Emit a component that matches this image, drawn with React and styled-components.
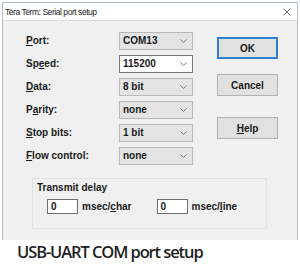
import React from 'react';
import styled, { createGlobalStyle } from 'styled-components';

const GlobalStyle = createGlobalStyle`
  html, body {
    margin: 0;
    background: #fff;
  }
`;

const Page = styled.div`
  width: 300px;
  height: 264px;
  padding: 2px 0 0 2px;
  box-sizing: border-box;
  overflow: hidden;
`;

const Window = styled.div`
  width: 296px;
  height: 238px;
  box-sizing: border-box;
  border: 1px solid #aebccc;
  border-bottom: none;
  background: #f0f0f0;
  display: flex;
  flex-direction: column;
  font-family: "Liberation Sans", Arial, sans-serif;
  color: #1a1a1a;
`;

const TitleBar = styled.div`
  height: 17px;
  background: #fff;
  border-bottom: 1px solid #dcdcdc;
  display: flex;
  align-items: center;
  justify-content: space-between;
  padding: 0 6px 0 2px;
  font-size: 8.5px;
  letter-spacing: -0.45px;
  color: #222;
`;

const Client = styled.div`
  display: flex;
  flex-direction: column;
`;

const TopArea = styled.div`
  display: flex;
`;

const Form = styled.div`
  display: flex;
  flex-direction: column;
  padding: 8px 0 0 23px;
`;

const Row = styled.div`
  height: 23px;
  display: flex;
  align-items: center;
`;

const Label = styled.div`
  width: 93px;
  font-size: 10px;
  font-weight: bold;
`;

const Key = styled.span`
  text-decoration: underline;
  text-underline-offset: 1px;
`;

const Select = styled.div`
  width: 74px;
  height: 18px;
  box-sizing: border-box;
  border: 1px solid ${p => (p.$editable ? '#7a7a7a' : '#b9b9b9')};
  background: ${p => (p.$editable ? '#fff' : '#e4e4e4')};
  display: flex;
  align-items: center;
  justify-content: space-between;
  padding: 0 5px 0 3px;
  font-size: 10px;
  font-weight: bold;
`;

const Buttons = styled.div`
  display: flex;
  flex-direction: column;
  padding: 16px 0 0 24px;
`;

const Button = styled.div`
  width: 61px;
  height: 22px;
  box-sizing: border-box;
  margin-top: ${p => p.$gap || 0}px;
  border: ${p => (p.$primary ? '2px solid #2f7fd0' : '1px solid #b3b3b3')};
  background: #e1e1e1;
  display: flex;
  align-items: center;
  justify-content: center;
  font-size: 10px;
  font-weight: bold;
`;

const Group = styled.div`
  width: 235px;
  height: 51px;
  box-sizing: border-box;
  margin: 11px 0 0 29px;
  border: 1px solid #e2e2e2;
  padding: 3px 0 0 4px;
  display: flex;
  flex-direction: column;
`;

const GroupTitle = styled.div`
  font-size: 10px;
  font-weight: bold;
  line-height: 12px;
`;

const DelayRow = styled.div`
  display: flex;
  align-items: center;
  padding: 5px 0 0 10px;
`;

const Pair = styled.div`
  display: flex;
  align-items: center;
  width: 110px;
  gap: 4px;
`;

const NumberBox = styled.div`
  width: 31px;
  height: 15px;
  box-sizing: border-box;
  border: 1px solid #6e6e6e;
  background: #fff;
  padding-left: 3px;
  display: flex;
  align-items: center;
  font-size: 10px;
  font-weight: bold;
`;

const Unit = styled.div`
  font-size: 10px;
  font-weight: bold;
`;

const Caption = styled.div`
  padding: 2px 0 0 15px;
  font-family: "Open Sans", "Noto Sans", sans-serif;
  font-size: 16.5px;
  font-weight: 600;
  letter-spacing: -1.1px;
  line-height: 20px;
  color: #1f1f1f;
`;

const Chevron = () => (
  <svg width="7" height="4" viewBox="0 0 7 4">
    <polyline points="0.5,0.5 3.5,3.5 6.5,0.5" fill="none" stroke="#777" strokeWidth="1" />
  </svg>
);

const CloseIcon = () => (
  <svg width="8" height="8" viewBox="0 0 8 8">
    <path d="M0.5 0.5 L7.5 7.5 M7.5 0.5 L0.5 7.5" stroke="#666" strokeWidth="0.9" />
  </svg>
);

const fields = [
  { label: ['', 'P', 'ort:'], value: 'COM13' },
  { label: ['Sp', 'e', 'ed:'], value: '115200', editable: true },
  { label: ['', 'D', 'ata:'], value: '8 bit' },
  { label: ['P', 'a', 'rity:'], value: 'none' },
  { label: ['', 'S', 'top bits:'], value: '1 bit' },
  { label: ['', 'F', 'low control:'], value: 'none' },
];

export default function App() {
  return (
    <Page>
      <GlobalStyle />
      <Window>
        <TitleBar>
          <span>Tera Term: Serial port setup</span>
          <CloseIcon />
        </TitleBar>
        <Client>
          <TopArea>
            <Form>
              {fields.map(f => (
                <Row key={f.value + f.label[2]}>
                  <Label>
                    {f.label[0]}
                    <Key>{f.label[1]}</Key>
                    {f.label[2]}
                  </Label>
                  <Select $editable={f.editable}>
                    <span>{f.value}</span>
                    <Chevron />
                  </Select>
                </Row>
              ))}
            </Form>
            <Buttons>
              <Button $primary>OK</Button>
              <Button $gap={15}>Cancel</Button>
              <Button $gap={21}>
                <span><Key>H</Key>elp</span>
              </Button>
            </Buttons>
          </TopArea>
          <Group>
            <GroupTitle>Transmit delay</GroupTitle>
            <DelayRow>
              <Pair>
                <NumberBox>0</NumberBox>
                <Unit>msec/<Key>c</Key>har</Unit>
              </Pair>
              <Pair>
                <NumberBox>0</NumberBox>
                <Unit>msec/<Key>l</Key>ine</Unit>
              </Pair>
            </DelayRow>
          </Group>
        </Client>
      </Window>
      <Caption>USB-UART COM port setup</Caption>
    </Page>
  );
}
